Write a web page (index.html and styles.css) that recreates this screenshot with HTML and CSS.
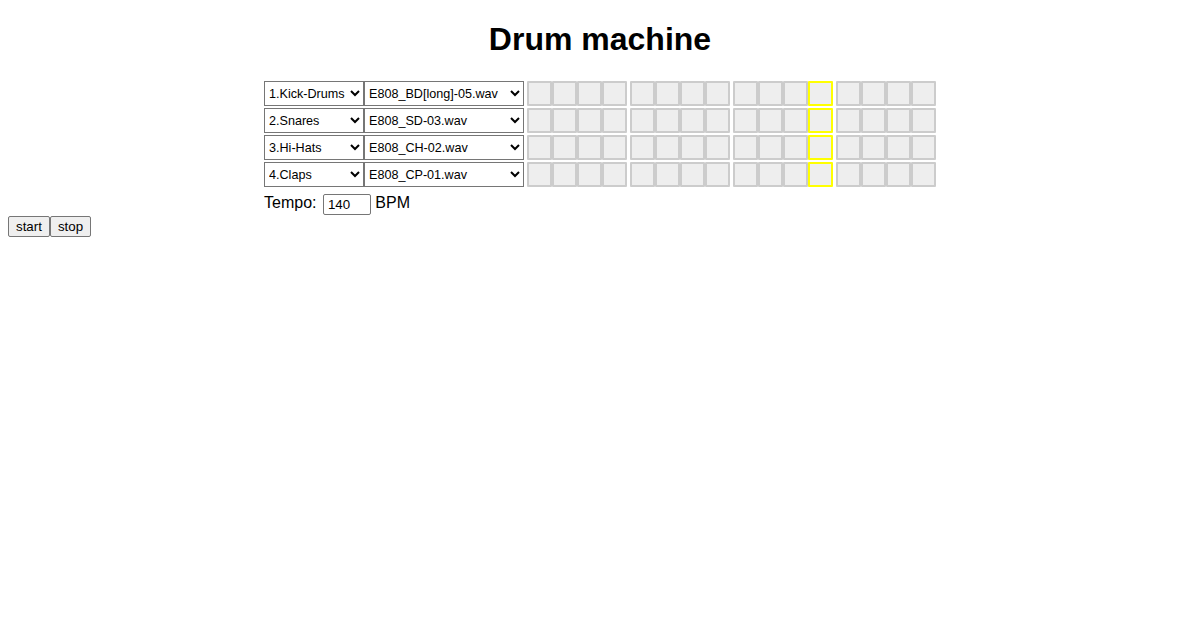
FILE: index.html
```html
<!doctype html>
<html lang="en">
  <head>
    <meta charset="UTF-8" />
    <meta name="viewport" content="width=device-width, initial-scale=1.0" />
    <title>Drum machine</title>
    <link rel="stylesheet" href="styles.css">
  </head>
  <body>
    <h1>Drum machine</h1>

    <div class="machine">
      <div class="track">
        <select class="kit"><option>1.Kick-Drums</option></select>
        <select class="sample"><option>E808_BD[long]-05.wav</option></select>
        <div class="steps">
          <div class="group"><span class="step"></span><span class="step"></span><span class="step"></span><span class="step"></span></div>
          <div class="group"><span class="step"></span><span class="step"></span><span class="step"></span><span class="step"></span></div>
          <div class="group"><span class="step"></span><span class="step"></span><span class="step"></span><span class="step current"></span></div>
          <div class="group"><span class="step"></span><span class="step"></span><span class="step"></span><span class="step"></span></div>
        </div>
      </div>
      <div class="track">
        <select class="kit"><option>2.Snares</option></select>
        <select class="sample"><option>E808_SD-03.wav</option></select>
        <div class="steps">
          <div class="group"><span class="step"></span><span class="step"></span><span class="step"></span><span class="step"></span></div>
          <div class="group"><span class="step"></span><span class="step"></span><span class="step"></span><span class="step"></span></div>
          <div class="group"><span class="step"></span><span class="step"></span><span class="step"></span><span class="step current"></span></div>
          <div class="group"><span class="step"></span><span class="step"></span><span class="step"></span><span class="step"></span></div>
        </div>
      </div>
      <div class="track">
        <select class="kit"><option>3.Hi-Hats</option></select>
        <select class="sample"><option>E808_CH-02.wav</option></select>
        <div class="steps">
          <div class="group"><span class="step"></span><span class="step"></span><span class="step"></span><span class="step"></span></div>
          <div class="group"><span class="step"></span><span class="step"></span><span class="step"></span><span class="step"></span></div>
          <div class="group"><span class="step"></span><span class="step"></span><span class="step"></span><span class="step current"></span></div>
          <div class="group"><span class="step"></span><span class="step"></span><span class="step"></span><span class="step"></span></div>
        </div>
      </div>
      <div class="track">
        <select class="kit"><option>4.Claps</option></select>
        <select class="sample"><option>E808_CP-01.wav</option></select>
        <div class="steps">
          <div class="group"><span class="step"></span><span class="step"></span><span class="step"></span><span class="step"></span></div>
          <div class="group"><span class="step"></span><span class="step"></span><span class="step"></span><span class="step"></span></div>
          <div class="group"><span class="step"></span><span class="step"></span><span class="step"></span><span class="step current"></span></div>
          <div class="group"><span class="step"></span><span class="step"></span><span class="step"></span><span class="step"></span></div>
        </div>
      </div>

      <div class="tempo">
        Tempo: <input type="text" class="bpm" value="140"> BPM
      </div>
    </div>

    <div class="transport"><button>start</button><button>stop</button></div>
  </body>
</html>
```

FILE: styles.css
```css
body {
  margin: 8px;
  font-family: "Liberation Sans", Arial, sans-serif;
  font-size: 16px;
  color: #000;
}

h1 {
  text-align: center;
  font-size: 32px;
  margin: 13px 0 23px;
}

.machine {
  width: 672px;
  margin: 0 auto;
}

.track {
  display: flex;
  height: 25px;
  margin-bottom: 2px;
}

select {
  box-sizing: border-box;
  height: 25px;
  font-family: "Liberation Sans", Arial, sans-serif;
  font-size: 12.6px;
  color: #000;
  background: #fff;
  border: 1px solid #767676;
  border-radius: 0;
  padding: 0;
  margin: 0;
}

.kit {
  width: 100px;
}

.sample {
  width: 160px;
}

.steps {
  display: flex;
}

.group {
  display: flex;
  margin-left: 3px;
}

.step {
  box-sizing: border-box;
  width: 25px;
  height: 25px;
  background: #eee;
  border: 2px solid #ccc;
  border-radius: 1px;
}

.step.current {
  border-color: #ff0;
}

.tempo {
  margin-top: 3px;
  line-height: 25px;
}

.bpm {
  box-sizing: border-box;
  width: 48px;
  height: 21px;
  margin: 0 0 0 2px;
  font-family: "Liberation Sans", Arial, sans-serif;
  font-size: 13.33px;
  padding: 1px 4px;
  border: 1px solid #767676;
  border-radius: 2px;
  vertical-align: -1px;
}

.transport {
  margin-top: 1px;
}

.transport button {
  font-family: "Liberation Sans", Arial, sans-serif;
  font-size: 13.33px;
  height: 21px;
  padding: 1px 7px;
  margin: 0;
  color: #000;
  background: #efefef;
  border: 1px solid #767676;
  border-radius: 2px;
}
```
